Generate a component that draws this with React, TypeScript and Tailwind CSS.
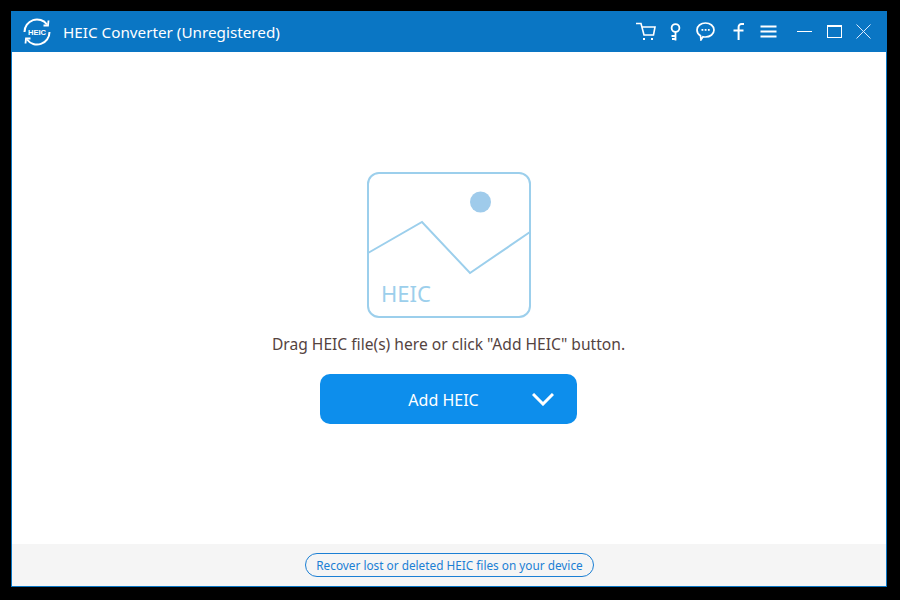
import React from 'react';

const font = { fontFamily: '"Noto Sans", "Liberation Sans", sans-serif' };

function Logo() {
  return (
    <svg width="30" height="30" viewBox="0 0 30 30" fill="none" stroke="white" strokeWidth="2">
      <path d="M2.5 15 A12.5 12.5 0 0 1 25 7.5" />
      <path d="M27.5 15 A12.5 12.5 0 0 1 5 22.5" />
      <path d="M21.5 8.5 L26 8.5 L26.5 3.5" strokeWidth="1.8" />
      <path d="M8.5 21.5 L4 21.5 L3.5 26.5" strokeWidth="1.8" />
      <text x="15" y="17.5" textAnchor="middle" fill="white" stroke="none" fontSize="7.6" fontWeight="700" fontFamily="Liberation Sans, sans-serif">HEIC</text>
    </svg>
  );
}

function TitleIcons() {
  return (
    <div className="flex items-center text-white">
      <svg width="20" height="19" viewBox="0 0 20 19" fill="none" stroke="white" strokeWidth="1.6">
        <path d="M0 1.5 H5 L8 13 H17.5 L19 5 H6" />
        <rect x="7" y="16" width="2" height="2" fill="white" stroke="none" />
        <rect x="15" y="16" width="2" height="2" fill="white" stroke="none" />
      </svg>
      <svg className="ml-[14px]" width="11" height="18" viewBox="0 0 11 18" fill="none" stroke="white" strokeWidth="1.8">
        <circle cx="5.5" cy="5" r="3.9" />
        <path d="M5.5 9 V17.5 M5.5 13 H1.5 M5.5 16 H2" />
      </svg>
      <svg className="ml-[15px]" width="19" height="19" viewBox="0 0 19 19" fill="none" stroke="white" strokeWidth="1.7">
        <path d="M9.5 1 C14.2 1 18 4 18 8 C18 12 14.2 15 9.5 15 C8.6 15 7.8 14.9 7 14.7 L5 17.8 L4.5 13.8 C2.4 12.5 1 10.4 1 8 C1 4 4.8 1 9.5 1 Z" />
        <rect x="5.5" y="7" width="1.8" height="1.8" fill="white" stroke="none" />
        <rect x="8.7" y="7" width="1.8" height="1.8" fill="white" stroke="none" />
        <rect x="11.9" y="7" width="1.8" height="1.8" fill="white" stroke="none" />
      </svg>
      <svg className="ml-[18px]" width="12" height="17" viewBox="0 0 12 17" fill="none" stroke="white" strokeWidth="2">
        <path d="M11 1 H8.5 C6.8 1 5.6 2.2 5.6 4 V17 M0.5 7.5 H10.5" />
      </svg>
      <svg className="ml-[15px]" width="17" height="13" viewBox="0 0 17 13" stroke="white" strokeWidth="2">
        <path d="M0.5 1.5 H16.5 M0.5 6.5 H16.5 M0.5 11.5 H16.5" />
      </svg>
      <svg className="ml-[20px]" width="15" height="3" viewBox="0 0 15 3" stroke="white" strokeWidth="1">
        <path d="M0 1.5 H15" />
      </svg>
      <div className="ml-[15px] w-[15px] h-[13px] border border-white border-t-2" />
      <svg className="ml-[14px] mr-[16px]" width="15" height="15" viewBox="0 0 15 15" stroke="#dbeafe" strokeWidth="1">
        <path d="M0.5 0.5 L14.5 14.5 M14.5 0.5 L0.5 14.5" />
      </svg>
    </div>
  );
}

function ImagePlaceholder() {
  return (
    <svg width="164" height="146" viewBox="0 0 164 146" fill="none" stroke="#9ccfec" strokeWidth="2">
      <rect x="1" y="1" width="162" height="144" rx="11" />
      <path d="M1 81 L55 50 L103 101 L163 60" />
      <circle cx="113.5" cy="30" r="10.5" fill="#9fcbeb" stroke="none" />
      <text x="14" y="130" fill="#9ccfec" stroke="none" fontSize="22" style={font}>HEIC</text>
    </svg>
  );
}

export default function App() {
  return (
    <div className="w-[900px] h-[600px] bg-black pt-[11px] pl-[11px]" style={font}>
      <div className="w-[876px] h-[576px] flex flex-col bg-white border border-[#0a76c4] border-t-0">
        <header className="h-[41px] -mx-px flex items-center justify-between bg-[#0a76c4] pl-[11px]">
          <div className="flex items-center">
            <Logo />
            <span className="ml-[11px] text-[15.25px] text-white pt-[2px]">HEIC Converter (Unregistered)</span>
          </div>
          <TitleIcons />
        </header>

        <main className="flex-1 flex flex-col items-center pt-[120px] pr-[1px]">
          <ImagePlaceholder />
          <p className="mt-[15px] text-[15.6px] leading-[22px] text-[#55433f]">
            Drag HEIC file(s) here or click "Add HEIC" button.
          </p>
          <button className="mt-[19px] relative w-[257px] h-[50px] rounded-[10px] bg-[#0d8eec] text-[16px] text-white pr-[10px] pt-[2px]">
            Add HEIC
            <svg className="absolute left-[212px] top-[19px]" width="22" height="13" viewBox="0 0 22 13" fill="none" stroke="white" strokeWidth="3">
              <path d="M1 1 L11 11 L21 1" />
            </svg>
          </button>
        </main>

        <footer className="h-[42px] flex items-center justify-center bg-[#f5f5f5] pl-[1px]">
          <a className="h-[24px] w-[289px] flex items-center justify-center rounded-full border border-[#1b7fd4] text-[11.8px] text-[#1b7fd4] pt-px">
            Recover lost or deleted HEIC files on your device
          </a>
        </footer>
      </div>
    </div>
  );
}
